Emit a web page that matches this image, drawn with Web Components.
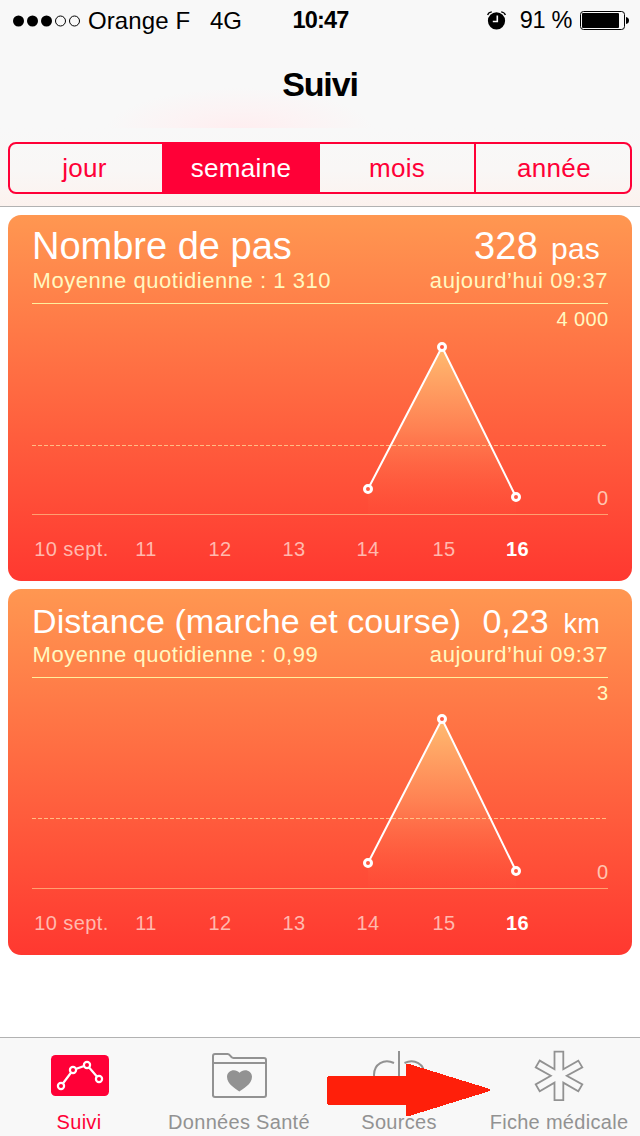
<!DOCTYPE html>
<html lang="fr">
<head>
<meta charset="utf-8">
<title>Suivi</title>
<style>
  body {
    margin: 0;
    background: #fff;
    font-family: "Liberation Sans", Arial, sans-serif;
  }
</style>
</head>
<body>
<health-app>
  <nav-header slot="header" heading="Suivi">
    <status-bar slot="status" carrier="Orange F" network="4G" time="10:47" battery="91 %"></status-bar>
    <segment-control items="jour,semaine,mois,année" selected="1"></segment-control>
  </nav-header>
  <health-card max="4 000" points="336,196 410,54 484,204" average-y="152.5">
    <span slot="title">Nombre de pas</span>
    <span slot="value">328</span>
    <span slot="unit">pas</span>
    <span slot="average">Moyenne quotidienne : 1 310</span>
    <span slot="date">aujourd’hui 09:37</span>
  </health-card>
  <health-card class="compact" max="3" points="336,196 410,52 484,204" average-y="151.5">
    <span slot="title">Distance (marche et course)</span>
    <span slot="value">0,23</span>
    <span slot="unit">km</span>
    <span slot="average">Moyenne quotidienne : 0,99</span>
    <span slot="date">aujourd’hui 09:37</span>
  </health-card>
  <tab-bar slot="footer">
    <tab-item icon="dashboard" label="Suivi" selected></tab-item>
    <tab-item icon="folder" label="Données Santé"></tab-item>
    <tab-item icon="sources" label="Sources"></tab-item>
    <tab-item icon="medical" label="Fiche médicale"></tab-item>
    <pointer-arrow slot="overlay"></pointer-arrow>
  </tab-bar>
</health-app>

<script>
const icons = {
  dashboard: `
    <rect x="1" y="5" width="58" height="41" rx="4.5" fill="currentColor"/>
    <path d="M11 36 L23 20 L37 15 L49 29" fill="none" stroke="#fff" stroke-width="2.2"/>
    <g fill="#ff0037" stroke="#fff" stroke-width="2.2">
      <circle cx="11" cy="36" r="3.1"/><circle cx="23" cy="20" r="3.1"/>
      <circle cx="37" cy="15" r="3.1"/><circle cx="49" cy="29" r="3.1"/>
    </g>`,
  folder: `
    <g fill="none" stroke="currentColor" stroke-width="2">
      <path d="M3 46 V6 Q3 4 5 4 H17.5 Q19 4 20 5.5 L21.5 7.2 Q22.2 8 23.5 8 H54 Q56 8 56 10 V45 Q56 47 54 47 H5 Q3 47 3 45 Z"/>
      <path d="M3 13 H56"/>
    </g>
    <path d="M29.3 41.5 C26.3 39 17 34.5 17 26.8 C17 20.2 25.5 17.8 29.5 22.8 C33.5 17.8 42 20.2 42 26.8 C42 34.5 32.5 39 29.3 41.5 Z" fill="currentColor"/>`,
  sources: `
    <g fill="none" stroke="currentColor" stroke-width="2">
      <path d="M29 1 V44"/>
      <path d="M24 13 C14 8.5 4 14 4 25 C4 36 14 40 24 36"/>
      <path d="M34.5 13 C44.5 8.5 54.5 14 54.5 25 C54.5 36 44.5 40 34.5 36"/>
    </g>`,
  medical: `
    <path d="M24.5 1.7 H33.3 V19.2 L48.3 10.6 L52.3 17.4 L36.8 25.8 L52.3 34.4 L48.3 41.2 L33.3 32.6 V50.2 H24.5 V32.6 L9.7 41.2 L5.7 34.4 L20.8 25.8 L5.7 17.4 L9.7 10.6 L24.5 19.2 Z"
      fill="none" stroke="currentColor" stroke-width="1.8"/>`,
};

class HealthApp extends HTMLElement {
  constructor() {
    super();
    this.attachShadow({ mode: 'open' }).innerHTML = `
      <style>
        :host { display: flex; flex-direction: column; width: 640px; height: 1136px; overflow: hidden; }
        main { flex: 1; display: flex; flex-direction: column; gap: 8px; padding: 8px 8px 0; }
      </style>
      <slot name="header"></slot>
      <main><slot></slot></main>
      <slot name="footer"></slot>
    `;
  }
}

class NavHeader extends HTMLElement {
  constructor() {
    super();
    this.attachShadow({ mode: 'open' }).innerHTML = `
      <style>
        :host {
          display: flex;
          flex-direction: column;
          box-sizing: border-box;
          height: 207px;
          border-bottom: 1px solid #b2b2b2;
          background: linear-gradient(#f8f8f8 128px, #f9f7f6 170px, #fcf2ee 206px);
        }
        .top {
          height: 128px;
          background: radial-gradient(ellipse 135px 44px at 240px 132px, #ffedef, #fcf3f4 50%, #f8f8f8);
        }
        h1 {
          margin: 0;
          font-size: 34px;
          line-height: 44px;
          padding-top: 21px;
          text-align: center;
          letter-spacing: -1.1px;
          font-weight: 700;
        }
        .controls { padding: 14px 8px 0; }
      </style>
      <div class="top">
        <slot name="status"></slot>
        <h1></h1>
      </div>
      <div class="controls"><slot></slot></div>
    `;
  }

  connectedCallback() {
    this.shadowRoot.querySelector('h1').textContent = this.getAttribute('heading');
  }
}

class StatusBar extends HTMLElement {
  constructor() {
    super();
    this.attachShadow({ mode: 'open' }).innerHTML = `
      <style>
        :host {
          display: grid;
          grid-template-columns: 1fr 60px 1fr;
          height: 41px;
          font-size: 24px;
          line-height: 41px;
          white-space: nowrap;
          color: #000;
        }
        .left, .right { display: flex; align-items: center; }
        .left { padding-left: 13px; }
        .right { justify-content: flex-end; padding-right: 11px; }
        .carrier { flex: none; width: 129px; padding-left: 7px; box-sizing: border-box; letter-spacing: 0.1px; }
        .time { text-align: center; font-size: 23.5px; font-weight: 700; letter-spacing: -0.8px; padding-left: 1px; }
        .battery { font-size: 23.5px; letter-spacing: -0.3px; margin: 0 8px 0 13px; }
        svg { display: block; flex: none; }
      </style>
      <div class="left">
        <svg width="68" height="12" viewBox="0 0 68 12">
          <circle cx="5.5" cy="6" r="5.5"/><circle cx="19.5" cy="6" r="5.5"/><circle cx="33.5" cy="6" r="5.5"/>
          <g fill="none" stroke="#000"><circle cx="47.5" cy="6" r="5"/><circle cx="61.5" cy="6" r="5"/></g>
        </svg>
        <span class="carrier"></span>
        <span class="network"></span>
      </div>
      <div class="time"></div>
      <div class="right">
        <svg width="20" height="19" viewBox="0 0 20 19">
          <circle cx="9.5" cy="9.8" r="8.6"/>
          <path d="M0.6 4 Q1.5 1.2 4.8 0.8 M14.2 0.8 Q17.5 1.2 18.4 4" fill="none" stroke="#000" stroke-width="1.3"/>
          <path d="M10.3 4.5 V10.5 H5.8" fill="none" stroke="#f8f8f8" stroke-width="1.6"/>
        </svg>
        <span class="battery"></span>
        <svg width="49" height="19" viewBox="0 0 49 19">
          <rect x="0.5" y="0.5" width="44" height="18" rx="3" fill="none" stroke="#000"/>
          <rect x="2" y="2" width="37" height="15" rx="1"/>
          <path d="M46 6 Q49 6.5 49 9.5 Q49 12.5 46 13 Z"/>
        </svg>
      </div>
    `;
  }

  connectedCallback() {
    for (const name of ['carrier', 'network', 'time', 'battery']) {
      this.shadowRoot.querySelector(`.${name}`).textContent = this.getAttribute(name);
    }
  }
}

class SegmentControl extends HTMLElement {
  constructor() {
    super();
    this.attachShadow({ mode: 'open' }).innerHTML = `
      <style>
        :host {
          display: grid;
          grid-template-columns: 152px 158px 156px 154px;
          box-sizing: border-box;
          height: 52px;
          border: 2px solid #ff0037;
          border-radius: 8px;
          overflow: hidden;
          font-size: 26px;
          line-height: 48px;
          letter-spacing: 0.3px;
          text-align: center;
          color: #ff0037;
        }
        span:nth-child(1) { padding-right: 3px; }
        span:nth-child(3) { border-right: 2px solid #ff0037; }
        span:nth-child(4) { padding-left: 2px; }
        .selected { background: #ff0037; color: #fff; }
      </style>
    `;
  }

  connectedCallback() {
    const selected = Number(this.getAttribute('selected'));
    const style = this.shadowRoot.querySelector('style');
    this.getAttribute('items').split(',').forEach((label, i) => {
      const item = document.createElement('span');
      item.textContent = label;
      item.classList.toggle('selected', i === selected);
      // before the style element, so that nth-child counts segments only
      this.shadowRoot.insertBefore(item, style);
    });
  }
}

class HealthCard extends HTMLElement {
  constructor() {
    super();
    this.attachShadow({ mode: 'open' }).innerHTML = `
      <style>
        :host {
          display: block;
          box-sizing: border-box;
          height: 366px;
          padding: 11px 24px 0;
          border-radius: 13px;
          background: linear-gradient(#ff9751, #ff3830);
          color: #fff;
          white-space: nowrap;
        }
        .head { display: flex; align-items: baseline; height: 42px; padding-right: 8px; }
        .head::before { content: "\\200b"; font-size: 38px; line-height: 41px; }
        .title { flex: 1; font-size: 38px; line-height: 41px; }
        .value { font-size: 38px; letter-spacing: 0.2px; line-height: 41px; }
        .unit { font-size: 30px; letter-spacing: 0.2px; margin-left: 13px; }
        :host(.compact) .title { font-size: 34px; letter-spacing: 0.08px; }
        :host(.compact) .value { font-size: 34px; letter-spacing: 0; }
        :host(.compact) .unit { font-size: 27px; margin-left: 15px; }
        .sub {
          display: flex;
          justify-content: space-between;
          height: 25px;
          padding-left: 0.5px;
          font-size: 22px;
          line-height: 26px;
          letter-spacing: 0.55px;
          color: #fff8c0;
        }
        svg { display: block; overflow: visible; font-size: 20px; letter-spacing: 0.4px; }
      </style>
      <div class="head">
        <div class="title"><slot name="title"></slot></div>
        <div class="value"><slot name="value"></slot></div>
        <div class="unit"><slot name="unit"></slot></div>
      </div>
      <div class="sub">
        <slot name="average"></slot>
        <slot name="date"></slot>
      </div>
      <div class="chart"></div>
    `;
  }

  connectedCallback() {
    const points = this.getAttribute('points').split(' ').map(p => p.split(',').map(Number));
    const line = points.map(p => p.join(' ')).join(' L');
    const top = Math.min(...points.map(p => p[1]));
    const avg = this.getAttribute('average-y');
    const days = [[39.5, '10 sept.'], [114, '11'], [188, '12'], [262, '13'], [336, '14'], [412, '15'], [485.5, '16']];

    this.shadowRoot.querySelector('.chart').innerHTML = `
      <svg width="576" height="288" viewBox="0 0 576 288">
        <defs>
          <linearGradient id="area" gradientUnits="userSpaceOnUse" x1="0" y1="${top}" x2="0" y2="221">
            <stop offset="0" stop-color="#ffc878" stop-opacity="0.85"/>
            <stop offset="0.5" stop-color="#ffb070" stop-opacity="0.4"/>
            <stop offset="1" stop-color="#ff6040" stop-opacity="0.05"/>
          </linearGradient>
        </defs>
        <path d="M0 10.5 H576" stroke="#ffef9c"/>
        <path d="M0 221.5 H576" stroke="#ffa070"/>
        <path d="M${points[0][0]} 221 L${line} V221 Z" fill="url(#area)"/>
        <path d="M0 ${avg} H575" stroke="#ffdc9c" stroke-opacity="0.75" stroke-dasharray="4 2"/>
        <path d="M${line}" fill="none" stroke="#fff" stroke-width="2"/>
        <g fill="#ff5a42" stroke="#fff" stroke-width="3">
          ${points.map(([x, y]) => `<circle cx="${x}" cy="${y}" r="3.5"/>`).join('')}
        </g>
        <text x="576.5" y="33" text-anchor="end" fill="#fff8c0">${this.getAttribute('max')}</text>
        <text x="576.5" y="212" text-anchor="end" fill="#ffc4b0">0</text>
        <g text-anchor="middle" fill="#ffb9ae">
          ${days.map(([x, label], i) => i === 6
            ? `<text x="${x}" y="263" fill="#fff" font-weight="700">${label}</text>`
            : `<text x="${x}" y="263">${label}</text>`).join('')}
        </g>
      </svg>
    `;
  }
}

class TabBar extends HTMLElement {
  constructor() {
    super();
    this.attachShadow({ mode: 'open' }).innerHTML = `
      <style>
        :host {
          position: relative;
          display: grid;
          grid-template-columns: repeat(4, 1fr);
          box-sizing: border-box;
          height: 99px;
          border-top: 1px solid #b2b2b2;
          background: #f8f8f8;
        }
        ::slotted(pointer-arrow) { position: absolute; left: 327px; top: 24px; }
      </style>
      <slot></slot>
      <slot name="overlay"></slot>
    `;
  }
}

class TabItem extends HTMLElement {
  constructor() {
    super();
    this.attachShadow({ mode: 'open' }).innerHTML = `
      <style>
        :host {
          display: flex;
          flex-direction: column;
          align-items: center;
          padding-top: 12px;
          color: #929292;
          font-size: 20px;
          line-height: 24px;
          letter-spacing: 0.3px;
          white-space: nowrap;
        }
        :host([selected]) { color: #ff0037; }
        .label { margin-top: 8px; padding-right: 2px; }
        svg { display: block; }
      </style>
      <svg width="60" height="52" viewBox="0 0 60 52"></svg>
      <span class="label"></span>
    `;
  }

  connectedCallback() {
    this.shadowRoot.querySelector('svg').innerHTML = icons[this.getAttribute('icon')];
    this.shadowRoot.querySelector('.label').textContent = this.getAttribute('label');
  }
}

class PointerArrow extends HTMLElement {
  constructor() {
    super();
    this.attachShadow({ mode: 'open' }).innerHTML = `
      <style>
        :host { display: block; width: 164px; height: 54px; }
        svg { display: block; }
      </style>
      <svg width="164" height="54" viewBox="0 0 164 54">
        <path d="M1 14 H79 V2.5 L80 2 L82 2 L163 27 V29 L82 54 H79 V42.5 H1 L0 41.5 V15 Z" fill="#ff1f0a" shape-rendering="crispEdges"/>
      </svg>
    `;
  }
}

customElements.define('health-app', HealthApp);
customElements.define('nav-header', NavHeader);
customElements.define('status-bar', StatusBar);
customElements.define('segment-control', SegmentControl);
customElements.define('health-card', HealthCard);
customElements.define('tab-bar', TabBar);
customElements.define('tab-item', TabItem);
customElements.define('pointer-arrow', PointerArrow);
</script>
</body>
</html>
